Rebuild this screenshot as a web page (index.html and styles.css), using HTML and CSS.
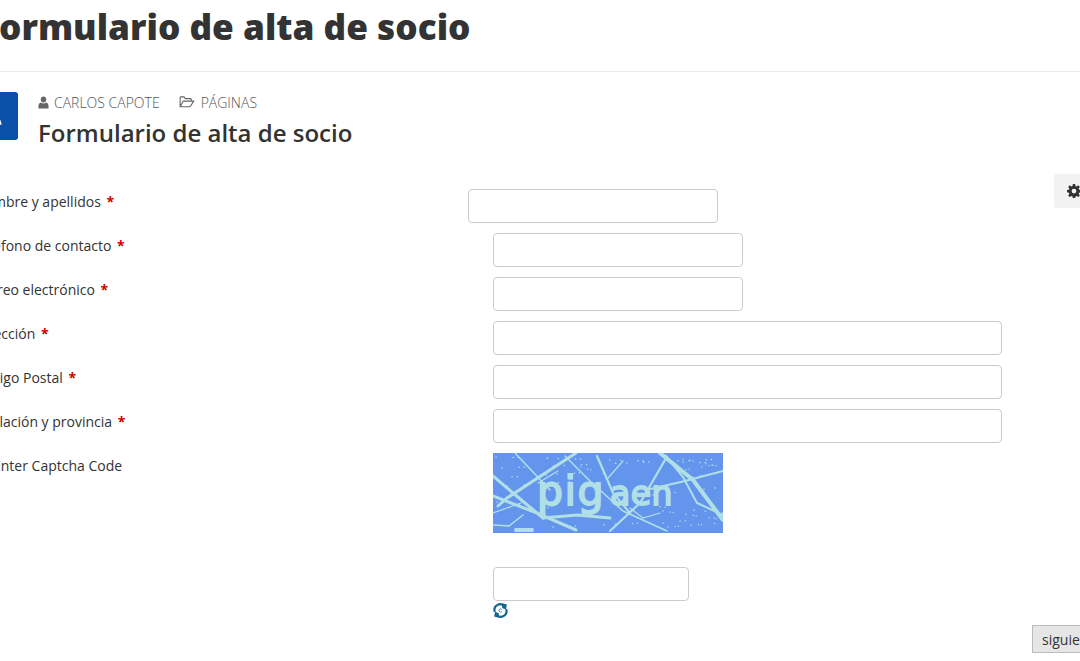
FILE: index.html
```html
<!DOCTYPE html>
<html lang="es">
<head>
<meta charset="utf-8">
<title>Formulario de alta de socio</title>
<link rel="stylesheet" href="styles.css">
</head>
<body>
<div class="page">
  <header class="hero"><h1>Formulario de alta de socio</h1></header>
  <section class="article-head">
    <div class="badge">
      <svg class="badge-icon" viewBox="0 0 16 16" width="20" height="20"><path fill="#fff" d="M8 2c2 0 3 1.500 3 3.500S10 9 8 9 5 7.500 5 5.500 6 2 8 2zM2 15c0-3 1.500-5 3.500-5.500 1.500 1 3.500 1 5 0C12.500 10 14 12 14 15z"/></svg>
    </div>
    <div class="head-text">
      <div class="meta">
        <span class="meta-item">
          <svg viewBox="0 0 12 14" width="11" height="13"><path fill="#666" d="M6 0.500c1.800 0 3 1.300 3 3.200S7.800 7 6 7 3 5.600 3 3.700 4.200 0.500 6 0.500zM0.500 13.500V11c0-2 1-3.500 2.600-4C4 7.700 5 8 6 8s2-.3 2.900-1c1.600.5 2.600 2 2.600 4v2.500z"/></svg>
          CARLOS CAPOTE
        </span>
        <span class="meta-item folder">
          <svg viewBox="0 0 18 14" width="16" height="12"><path fill="none" stroke="#666" stroke-width="1.300" stroke-linejoin="round" d="M1 12.500V2a1 1 0 0 1 1-1h3.500l1.500 2h6a1 1 0 0 1 1 1v2M1 12.500h11.500L17 6H4.500z"/></svg>
          PÁGINAS
        </span>
      </div>
      <h2>Formulario de alta de socio</h2>
    </div>
  </section>

  <button class="gear" type="button" aria-label="Opciones">
    <svg viewBox="0 0 16 16" width="14" height="14"><path fill="#333" fill-rule="evenodd" d="M6.700 0h2.600l.4 2.200 1.300.6L12.900 1.500 14.700 3.300 13.300 5.200l.6 1.300 2.100.4v2.600l-2.100.4-.6 1.300 1.400 1.900-1.800 1.800-1.900-1.300-1.300.6-.4 2.100H6.700l-.4-2.100-1.300-.6-1.900 1.300-1.800-1.800 1.400-1.900-.6-1.300L0 9.500V6.900l2.100-.4.6-1.300-1.400-1.900 1.800-1.800L5 2.800l1.300-.6zM8 5.400a2.700 2.700 0 1 0 0 5.400 2.700 2.700 0 0 0 0-5.400z"/></svg>
  </button>

  <form class="form">
    <div class="row first">
      <label>Nombre y apellidos <b>*</b></label>
      <input type="text">
    </div>
    <div class="row">
      <label>Teléfono de contacto <b>*</b></label>
      <input type="text">
    </div>
    <div class="row">
      <label>Correo electrónico <b>*</b></label>
      <input type="text">
    </div>
    <div class="row">
      <label>Dirección <b>*</b></label>
      <input class="wide" type="text">
    </div>
    <div class="row">
      <label>Código Postal <b>*</b></label>
      <input class="wide" type="text">
    </div>
    <div class="row">
      <label>Población y provincia <b>*</b></label>
      <input class="wide" type="text">
    </div>
    <div class="row captcha-row">
      <label class="captcha-label">Enter Captcha Code</label>
      <div class="captcha-field">
        <svg class="captcha" viewBox="0 0 230 80" width="230" height="80">
          <rect width="230" height="80" fill="#6495ed"/>
          <g fill="none" stroke="#b0e0e6" stroke-linecap="round">
            <path stroke-width="1.500" stroke-dasharray="0.100 17 0.100 5 0.100 29 0.100 11" d="M3 4 230 10M9 15 230 6M2 25 100 19M14 33 90 28M160 42 230 34M4 49 60 55M150 52 230 60M170 70 230 64M60 74 150 70"/>
            <path stroke-width="1.300" stroke-dasharray="0.100 7 0.100 3 0.100 13" d="M190 6 228 14M186 18 230 10M200 24 226 20M170 58 225 66M175 74 228 70M88 14 115 22"/>
            <path stroke-width="3" d="M0 23 20 40 50 65M83 0 14 45 5 53M0 43 44 60 83 77"/>
            <path stroke-width="1.500" d="M22 0 57 37M0 72 16 73 30 62M72 3 97 28 130 58 174 78"/>
            <path stroke-width="2.200" d="M104 3 120 40 137 60M172 7 147 50 117 78"/>
            <path stroke-width="4" d="M167 0 200 27 230 67"/>
            <path stroke-width="2" d="M173 3 190 24 204 50 230 62M153 37 192 28 230 18"/>
            <path stroke-width="3" d="M50 65 84 62 117 65"/>
            <path stroke-width="1.200" d="M137 55 150 65 167 60M115 25 130 8M45 30 65 18M0 60 28 50"/>
            <path stroke-width="4" d="M23 77H39"/>
          </g>
          <text class="captcha-text" y="52"><tspan x="44">pig</tspan><tspan class="captcha-small" x="117">aen</tspan></text>
        </svg>
        <input class="code" type="text">
        <a class="refresh" href="#" aria-label="Recargar">
          <svg viewBox="0 0 16 16" width="15" height="15">
            <path fill="none" stroke="#14688f" stroke-width="2.300" d="M2 9.500A6 6 0 0 1 12 3.300M14 6.500A6 6 0 0 1 4 12.700"/>
            <path fill="#14688f" d="M9.800 0.200 14.800 1.500 13.800 6.800 9.800 5.200zM6.200 15.800 1.200 14.500 2.200 9.200 6.200 10.800z"/>
            <path fill="none" stroke="#14688f" stroke-width=".9" d="M9.300 6.800A1.700 1.700 0 1 0 9.300 9.200"/>
          </svg>
        </a>
      </div>
    </div>
    <div class="actions"><button class="next" type="button">siguiente</button></div>
  </form>
</div>
</body>
</html>
```
FILE: styles.css
```css
html, body {
  margin: 0;
  height: 661px;
  overflow: hidden;
  background: #fff;
}
body {
  font-family: "Open Sans", sans-serif;
  font-size: 14px;
  color: #333;
}
.page {
  position: relative;
  width: 1240px;
  margin-left: -20px;
}
.hero {
  height: 71px;
  border-bottom: 1px solid #eaeaea;
}
.hero h1 {
  margin: 0;
  padding-top: 3px;
  font-size: 35.2px;
  line-height: 46px;
  font-weight: 800;
  color: #333;
}
.article-head {
  display: flex;
  gap: 20px;
  margin-top: 20px;
  margin-left: -10px;
}
.badge {
  width: 48px;
  height: 48px;
  border-radius: 3px;
  background: #0a50a8;
  display: flex;
  align-items: center;
  justify-content: center;
  flex: none;
}
.badge-icon {
  display: block;
}
.head-text {
  display: flex;
  flex-direction: column;
}
.meta {
  display: flex;
  gap: 19px;
  height: 20px;
  margin-bottom: 2px;
  align-items: center;
  font-size: 14px;
  font-weight: 300;
  color: #555;
}
.meta-item {
  display: flex;
  align-items: center;
  gap: 5px;
}
.meta-item.folder {
  gap: 6px;
}
.head-text h2 {
  margin: 0;
  font-size: 24px;
  line-height: 37px;
  font-weight: 600;
  color: #333;
}
.gear {
  position: absolute;
  left: 1074px;
  top: 174px;
  width: 60px;
  height: 34px;
  padding: 0 0 0 13px;
  border: 0;
  border-radius: 3px;
  background: #f2f2f2;
  display: flex;
  align-items: center;
}
.form {
  margin-top: 38px;
}
.row {
  display: grid;
  grid-template-columns: 513px 1fr;
  margin-bottom: 10px;
}
.row label {
  box-sizing: border-box;
  margin-left: -6px;
  line-height: 26px;
  height: 34px;
  color: #333;
}
.row label b {
  color: #c00;
  font-weight: 700;
  margin-left: 2px;
}
.row input {
  display: block;
  box-sizing: border-box;
  width: 250px;
  height: 34px;
  border: 1px solid #ccc;
  border-radius: 4px;
  background: #fff;
  padding: 0 8px;
}
.row.first input {
  margin-left: -25px;
}
.row input.wide {
  width: 509px;
}
.captcha-row {
  margin-bottom: 0;
}
.row .captcha-label {
  padding-left: 19px;
}
.captcha-field {
  display: flex;
  flex-direction: column;
}
.captcha {
  display: block;
}
.captcha-text {
  font-family: "DejaVu Sans", sans-serif;
  font-size: 41px;
  font-weight: 400;
  letter-spacing: 1.500px;
  fill: #b0e0e6;
  stroke: #b0e0e6;
  stroke-width: 1.800px;
}
.captcha-small {
  font-size: 33px;
  letter-spacing: 0.500px;
}
.row input.code {
  width: 196px;
  margin-top: 34px;
}
.refresh {
  display: block;
  width: 15px;
  height: 15px;
  margin-top: 2px;
}
.refresh svg {
  display: block;
}
.actions {
  margin-top: 7px;
  padding-left: 1052px;
}
.next {
  height: 28px;
  width: 90px;
  padding: 0 0 0 9px;
  text-align: left;
  font-family: "Open Sans", sans-serif;
  font-size: 14px;
  color: #333;
  background: #e6e6e6;
  border: 1px solid #bbb;
}
```
